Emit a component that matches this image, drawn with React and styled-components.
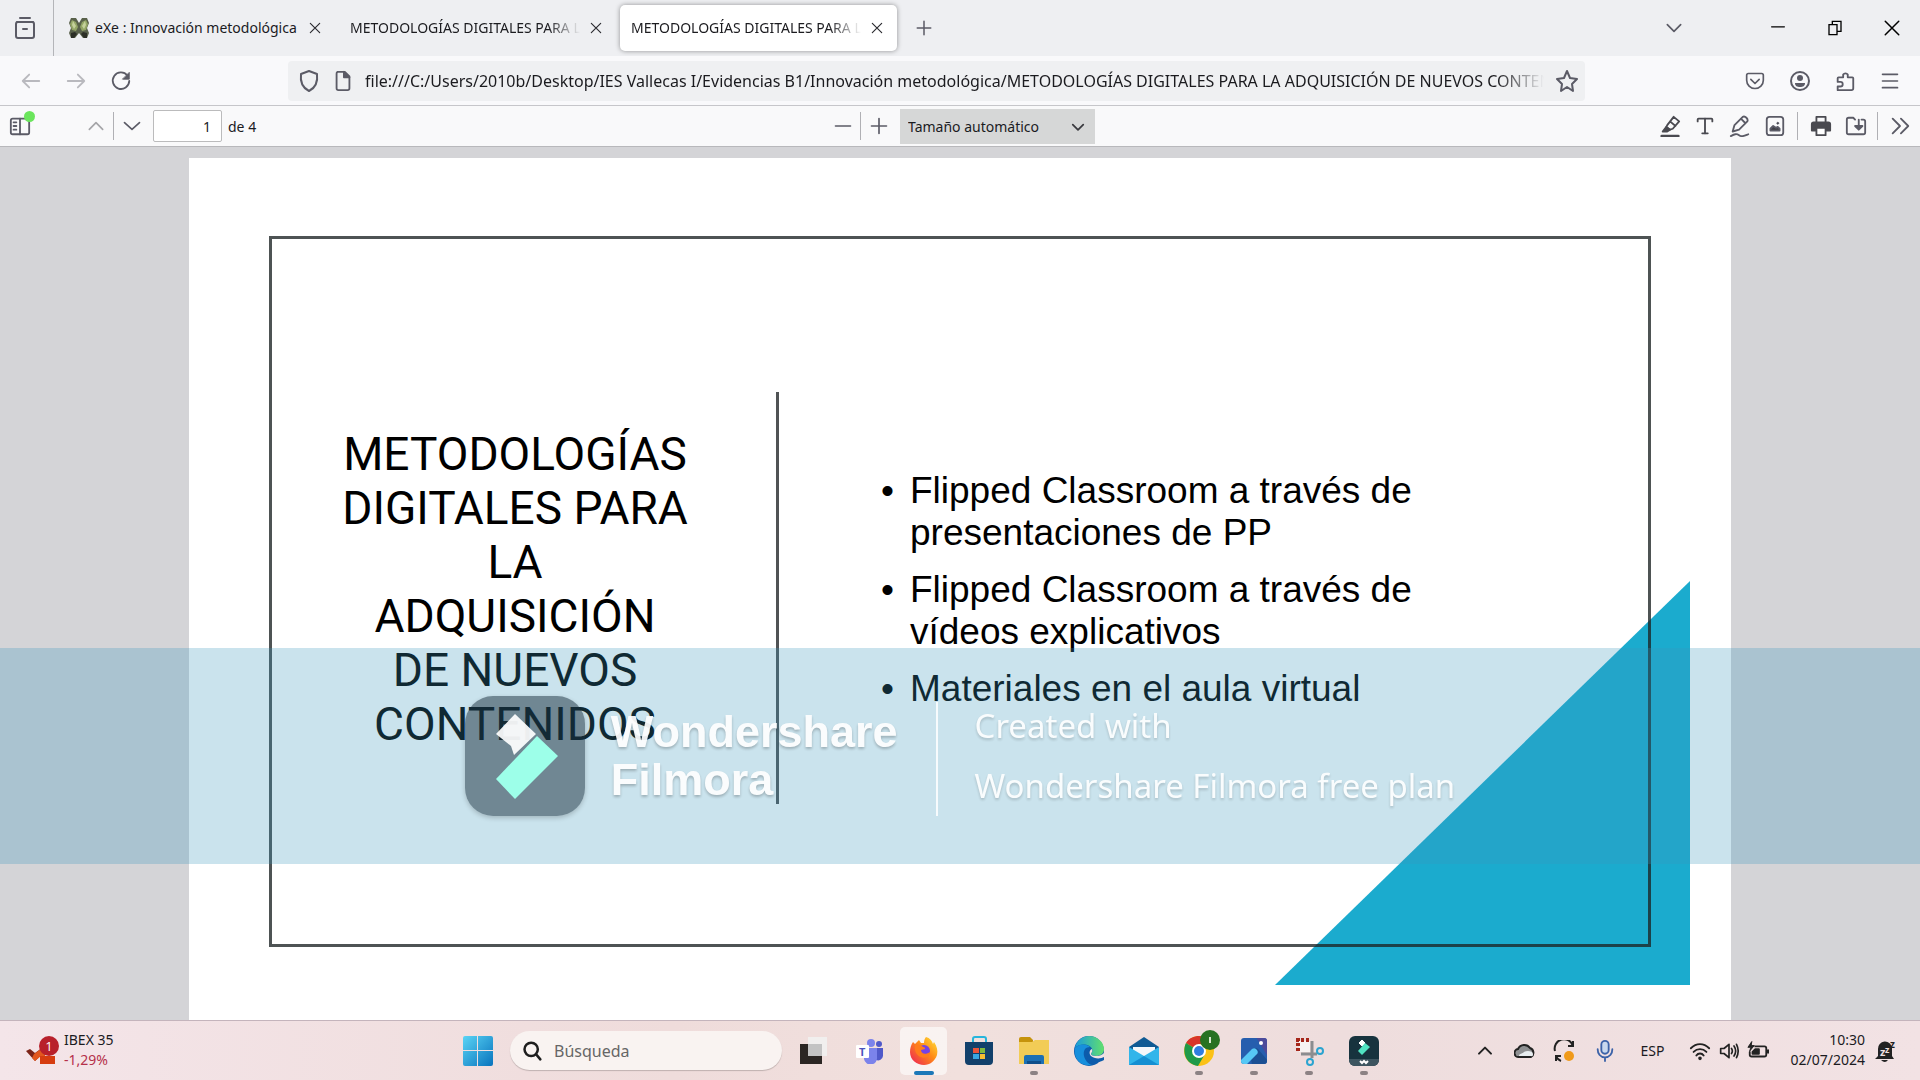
import React, { useState } from "react";
import styled, { createGlobalStyle } from "styled-components";
import { Type } from "lucide-react";

const GlobalStyle = createGlobalStyle`
  * {
    box-sizing: border-box;
  }
  body {
    margin: 0;
    overflow: hidden;
    font-family: "Noto Sans", "Open Sans", sans-serif;
    color: #1b1b1f;
  }
  button, input, select {
    font-family: inherit;
    color: inherit;
  }
  button {
    border: 0;
    padding: 0;
    background: none;
  }
  svg {
    display: block;
    flex: none;
  }
`;

// line icons of the browser chrome, all on a 24 grid
const Icon = ({ size = 24, width = 2, color = "#5b5b66", children }) => (
  <svg
    width={size}
    height={size}
    viewBox="0 0 24 24"
    fill="none"
    stroke={color}
    strokeWidth={width}
    strokeLinecap="round"
    strokeLinejoin="round"
    aria-hidden="true"
  >
    {children}
  </svg>
);

const CloseIcon = () => (
  <Icon size={14} width={2} color="#2b2b30">
    <path d="M4 4l16 16M20 4L4 20" />
  </Icon>
);

const Favicon = () => (
  <svg width="20" height="22" viewBox="0 0 20 22" aria-hidden="true">
    <path d="M2 1h5l3 5 3-5h5l2 5-2 5 2 5-2 5h-4l-4-5-4 5H2l-2-5 2-5-2-5z" fill="#59614b" />
    <path d="M3 3l4 2 2 5-2 4-4-1-2-6zM17 3l-4 2-2 5 2 4 4-1 2-6z" fill="#93a566" />
    <path d="M4 4l3 5-2 3-2-4zM16 4l-3 5 2 3 2-4z" fill="#c5d19c" />
    <path d="M2 16l4-1 2 2-3 4H2zM18 16l-4-1-2 2 3 4h3z" fill="#2c2f27" />
  </svg>
);

const tabs = [
  { id: 1, title: "eXe : Innovación metodológica", favicon: true },
  { id: 2, title: "METODOLOGÍAS DIGITALES PARA LA ADQUISICIÓN" },
  { id: 3, title: "METODOLOGÍAS DIGITALES PARA LA ADQUISICIÓN" },
];

const titleLines = [
  "METODOLOGÍAS",
  "DIGITALES PARA",
  "LA",
  "ADQUISICIÓN",
  "DE NUEVOS",
  "CONTENIDOS",
];

const points = [
  "Flipped Classroom a través de presentaciones de PP",
  "Flipped Classroom a través de vídeos explicativos",
  "Materiales en el aula virtual",
];

const TabStrip = () => {
  const [active, setActive] = useState(3);

  return (
    <TabBar>
      <FirefoxView>
        <IconButton $w={50} aria-label="Firefox View">
          <Icon size={24} width={2}>
            <path d="M7 2h10M4 6h16" />
            <rect x="3" y="6" width="18" height="16" rx="2" />
            <path d="M10 13h4" />
          </Icon>
        </IconButton>
      </FirefoxView>
      {tabs.map(({ id, title, favicon }) => (
        <Tab key={id} $active={active === id}>
          {favicon && <Favicon />}
          <TabTitle onClick={() => setActive(id)} $fade={!favicon}>
            {title}
          </TabTitle>
          <TabClose aria-label="Cerrar pestaña">
            <CloseIcon />
          </TabClose>
        </Tab>
      ))}
      <IconButton $w={50} aria-label="Nueva pestaña">
        <Icon size={18} width={2}>
          <path d="M12 3v18M3 12h18" />
        </Icon>
      </IconButton>
      <WindowControls>
        <IconButton $w={151} aria-label="Listar pestañas">
          <Icon size={20} width={2}>
            <path d="M4 8l8 8 8-8" />
          </Icon>
        </IconButton>
        <IconButton $w={57} aria-label="Minimizar">
          <Icon size={14} width={2} color="#000">
            <path d="M1 10h22" />
          </Icon>
        </IconButton>
        <IconButton $w={57} aria-label="Restaurar">
          <Icon size={16} width={2} color="#000">
            <path d="M3 7h12v15H3zM8 7V2h13v15h-6" strokeLinejoin="miter" />
          </Icon>
        </IconButton>
        <IconButton $w={57} aria-label="Cerrar">
          <Icon size={18} width={2} color="#000">
            <path d="M3 3l18 18M21 3L3 21" />
          </Icon>
        </IconButton>
      </WindowControls>
    </TabBar>
  );
};

const NavBar = () => (
  <Nav>
    <IconButton aria-label="Atrás" disabled>
      <Icon size={22} color="#b9b9be">
        <path d="M21 12H3M10 5l-7 7 7 7" />
      </Icon>
    </IconButton>
    <IconButton aria-label="Adelante" disabled>
      <Icon size={22} color="#b9b9be">
        <path d="M3 12h18M14 5l7 7-7 7" />
      </Icon>
    </IconButton>
    <IconButton aria-label="Recargar">
      <Icon size={22}>
        <path d="M19 6a9 9 0 1 0 2 6" />
        <path d="M21 3v7h-7z" fill="#5b5b66" strokeWidth="1" />
      </Icon>
    </IconButton>
    <UrlBar>
      <Icon size={24}>
        <path d="M12 2l8 3c1 8-2 14-8 17C6 19 3 13 4 5z" />
      </Icon>
      <Icon size={22}>
        <path d="M6 2h8l5 5v13a2 2 0 0 1-2 2H7a2 2 0 0 1-2-2V4a2 2 0 0 1 1-2z" />
        <path d="M13 2v6h6z" fill="#5b5b66" />
      </Icon>
      <UrlInput
        type="text"
        aria-label="Dirección"
        defaultValue="file:///C:/Users/2010b/Desktop/IES Vallecas I/Evidencias B1/Innovación metodológica/METODOLOGÍAS DIGITALES PARA LA ADQUISICIÓN DE NUEVOS CONTENIDOS.pdf"
      />
      <StarButton aria-label="Añadir a marcadores">
        <Icon size={24}>
          <path d="M12 2l3 7 7 1-5 5 1 7-6-4-6 4 1-7-5-5 7-1z" />
        </Icon>
      </StarButton>
    </UrlBar>
    <IconButton aria-label="Pocket">
      <Icon size={20}>
        <path d="M4 3h16a2 2 0 0 1 2 2v6a10 10 0 0 1-20 0V5a2 2 0 0 1 2-2z" />
        <path d="M7 10l5 5 5-5" />
      </Icon>
    </IconButton>
    <IconButton aria-label="Cuenta">
      <Icon size={24}>
        <circle cx="12" cy="12" r="9" />
        <circle cx="12" cy="9" r="3" fill="#5b5b66" stroke="none" />
        <path d="M7 14h10c0 3-2 4-5 4s-5-1-5-4z" fill="#5b5b66" stroke="none" />
      </Icon>
    </IconButton>
    <IconButton aria-label="Extensiones">
      <Icon size={22}>
        <path d="M4 22h15a2 2 0 0 0 2-2V9a1 1 0 0 0-1-1h-5V5a3 3 0 0 0-5 0v3H5a1 1 0 0 0-1 1v4h3a2 2 0 0 1 0 5H4z" />
      </Icon>
    </IconButton>
    <IconButton aria-label="Menú">
      <Icon size={20}>
        <path d="M3 4h18M3 12h18M3 20h18" />
      </Icon>
    </IconButton>
  </Nav>
);

const PdfToolbar = () => (
  <PdfBar>
    <PdfGroup>
      <SidebarButton aria-label="Mostrar barra lateral">
        <Icon size={22}>
          <rect x="2" y="4" width="20" height="17" rx="2" />
          <path d="M12 4v17M5 8h3M5 12h3M5 16h3" />
        </Icon>
        <GreenDot />
      </SidebarButton>
      <PdfButton aria-label="Página anterior">
        <Icon size={20} color="#a5a5a8">
          <path d="M4 16l8-8 8 8" />
        </Icon>
      </PdfButton>
      <Separator />
      <PdfButton aria-label="Página siguiente">
        <Icon size={20}>
          <path d="M3 8l9 8 9-8" />
        </Icon>
      </PdfButton>
      <PageInput id="page-number" type="text" defaultValue="1" />
      <PageLabel htmlFor="page-number">de 4</PageLabel>
    </PdfGroup>
    <PdfGroup>
      <PdfButton aria-label="Reducir">
        <Icon size={20}>
          <path d="M3 12h18" />
        </Icon>
      </PdfButton>
      <Separator />
      <PdfButton aria-label="Aumentar">
        <Icon size={20}>
          <path d="M12 3v18M3 12h18" />
        </Icon>
      </PdfButton>
      <ZoomBox>
        <ZoomSelect aria-label="Zoom" defaultValue="auto">
          <option value="auto">Tamaño automático</option>
          <option value="100">100 %</option>
        </ZoomSelect>
        <ZoomArrow>
          <Icon size={14} width={3} color="#3a3a3f">
            <path d="M3 8l9 9 9-9" />
          </Icon>
        </ZoomArrow>
      </ZoomBox>
    </PdfGroup>
    <PdfGroup $end>
      <PdfButton aria-label="Resaltar">
        <Icon size={22} color="#4a4a50">
          <path d="M3 23h18" strokeWidth="3" />
          <path d="M9 11l7-9 6 5-7 8-3 1-4-3zM12 7l6 5" />
          <path d="M8 13l4 3-3 2H4z" fill="#4a4a50" />
        </Icon>
      </PdfButton>
      <PdfButton aria-label="Texto">
        <Type size={22} color="#4a4a50" strokeWidth={2} />
      </PdfButton>
      <PdfButton aria-label="Dibujar">
        <Icon size={22}>
          <path d="M4 18l2-7 9-9q2-1 4 1t1 4l-9 9zM13 4l5 5" />
          <path d="M2 23c4-2 6-3 9-1s5 1 10-1" />
        </Icon>
      </PdfButton>
      <PdfButton aria-label="Añadir imagen">
        <Icon size={22}>
          <rect x="3" y="2" width="18" height="20" rx="3" />
          <path d="M7 17v-2l3-3 3 2 2-1 2 2v2z" fill="#3f3f45" />
          <circle cx="15" cy="9" r="1" fill="#3f3f45" strokeWidth="1" />
        </Icon>
      </PdfButton>
      <Separator $gap={5} />
      <PdfButton aria-label="Imprimir">
        <Icon size={22} color="#4a4a50">
          <path d="M7 8V2h10v6" />
          <path d="M4 8h16a2 2 0 0 1 2 2v7h-4v-3H6v3H2v-7a2 2 0 0 1 2-2z" fill="#4a4a50" />
          <path d="M7 14h10v8H7z" fill="#fff" />
        </Icon>
      </PdfButton>
      <PdfButton aria-label="Guardar">
        <Icon size={22}>
          <path d="M9 3H4a2 2 0 0 0-2 2v14a2 2 0 0 0 2 2h16a2 2 0 0 0 2-2V7a2 2 0 0 0-2-2h-2M9 3l2 2" />
          <path d="M15 5v10M11 12l4 4 4-4z" fill="#5b5b66" />
        </Icon>
      </PdfButton>
      <Separator $gap={4} />
      <PdfButton aria-label="Herramientas">
        <Icon size={22}>
          <path d="M4 4l8 8-8 8M13 4l8 8-8 8" />
        </Icon>
      </PdfButton>
    </PdfGroup>
  </PdfBar>
);

const Slide = () => (
  <Page>
    <Corner viewBox="0 0 415 404" preserveAspectRatio="none" aria-hidden="true">
      <path d="M415 0v404H0z" fill="#1babce" />
    </Corner>
    <Frame>
      <SlideTitle>
        {titleLines.map((line) => (
          <span key={line}>{line}</span>
        ))}
      </SlideTitle>
      <Divider />
      <Points>
        {points.map((point) => (
          <li key={point}>{point}</li>
        ))}
      </Points>
    </Frame>
  </Page>
);

const Watermark = () => (
  <Band>
    <FilmoraBadge>
      <svg width="120" height="120" viewBox="0 0 120 120" aria-hidden="true">
        <path d="M50 18l21 20-22 21-3-9-15-12z" fill="#fff" fillOpacity=".92" />
        <path d="M72 40l21 20-43 43-19-20z" fill="#9dffe9" />
      </svg>
    </FilmoraBadge>
    <Brand>
      Wondershare
      <br />
      Filmora
    </Brand>
    <BandLine />
    <Credit>
      Created with
      <br />
      Wondershare Filmora free plan
    </Credit>
  </Band>
);

/* Taskbar icons */
const StartIcon = () => (
  <svg width="30" height="30" viewBox="0 0 30 30">
    <defs>
      <linearGradient id="win" x1="0" y1="0" x2="1" y2="1">
        <stop offset="0" stopColor="#5ad4f5" />
        <stop offset="1" stopColor="#0873bd" />
      </linearGradient>
    </defs>
    <path d="M2 0h12v14H0V2a2 2 0 0 1 2-2zM15 0h13a2 2 0 0 1 2 2v12H15zM0 15h14v15H2a2 2 0 0 1-2-2zM15 15h15v13a2 2 0 0 1-2 2H15z" fill="url(#win)" />
  </svg>
);

const TaskViewIcon = () => (
  <svg width="30" height="28" viewBox="0 0 30 28">
    <path d="M1 7h22v20H1z" fill="#2b2623" />
    <path d="M9 0h19v19H9z" fill="#f1efee" />
    <path d="M9 7h14v12H9z" fill="#c3c3c3" />
  </svg>
);

const TeamsIcon = () => (
  <svg width="28" height="26" viewBox="0 0 28 26">
    <circle cx="16" cy="5" r="4" fill="#7b83eb" />
    <circle cx="24" cy="6" r="3" fill="#5059c9" />
    <path d="M19 10h9v8a5 5 0 0 1-7 4z" fill="#5059c9" />
    <path d="M9 10h13v9a6 6 0 0 1-13 2z" fill="#7b83eb" />
    <rect x="1" y="7" width="13" height="13" rx="1" fill="#fff" />
    <text x="4" y="18" fontSize="11" fontWeight="700" fontFamily="Open Sans" fill="#4b53bc">T</text>
  </svg>
);

const FirefoxIcon = () => (
  <svg width="30" height="30" viewBox="0 0 30 30">
    <defs>
      <linearGradient id="fox" x1="1" y1="0" x2="0" y2="1">
        <stop offset="0" stopColor="#ffe83b" />
        <stop offset=".45" stopColor="#ff8a16" />
        <stop offset="1" stopColor="#ec1a5c" />
      </linearGradient>
    </defs>
    <path d="M17 1c4 1 6 4 7 7l1-2c3 4 4 9 3 13-2 6-7 10-13 10C8 29 1 24 1 16c0-4 1-7 3-10l2 2 4-4 2 3 3 0c0-3 1-5 2-6z" fill="url(#fox)" />
    <circle cx="15" cy="15" r="6" fill="#7542e5" />
    <path d="M6 9c3-1 6 0 8 2 2 0 2 1 2 2l-4 1c0 4 5 5 9 2 0 4-5 7-9 5-4-1-7-6-6-12z" fill="#ff7c1c" />
  </svg>
);

const StoreIcon = () => (
  <svg width="30" height="30" viewBox="0 0 30 30">
    <path d="M9 8V3a2 2 0 0 1 2-2h9a2 2 0 0 1 2 2v5" fill="none" stroke="#27b5dc" strokeWidth="2" />
    <path d="M1 6h28v19a4 4 0 0 1-4 4H5a4 4 0 0 1-4-4z" fill="#12406b" />
    <path d="M9 12h6v5H9z" fill="#e9553a" />
    <path d="M16 12h5v5h-5z" fill="#80b93d" />
    <path d="M9 18h6v5H9z" fill="#37a8e3" />
    <path d="M16 18h5v5h-5z" fill="#f5bd32" />
  </svg>
);

const ExplorerIcon = () => (
  <svg width="32" height="28" viewBox="0 0 32 28">
    <path d="M1 2a2 2 0 0 1 2-2h9l3 3v4H1z" fill="#c6930c" />
    <path d="M1 5h13l3-2h14v24H1z" fill="#f2cc56" />
    <path d="M6 20a2 2 0 0 1 2-2h16a2 2 0 0 1 2 2v7H6z" fill="#1c70b5" />
    <path d="M9 24h14v3H9z" fill="#0f4f8b" />
  </svg>
);

const EdgeIcon = () => (
  <svg width="30" height="30" viewBox="0 0 30 30">
    <defs>
      <linearGradient id="edge" x1="0" y1="0" x2="1" y2="0">
        <stop offset="0" stopColor="#1a9bdc" />
        <stop offset="1" stopColor="#62e06c" />
      </linearGradient>
    </defs>
    <circle cx="15" cy="15" r="15" fill="#0d5cab" />
    <path d="M1 12C2 5 8 0 15 0c8 0 15 6 15 13 0 5-4 7-8 7-3 0-5-1-5-2s2-2 1-5c-1-4-11-7-17-1z" fill="url(#edge)" />
    <path d="M1 12c5-5 12-4 15-1-5 0-7 4-6 9 1 4 4 8 8 9C8 31-1 24 1 12z" fill="#178fdc" />
    <path d="M18 13c1 3-1 4-1 5s2 2 5 2c4 0 6-1 8-3v7l-2 1c-1 0-2 1-3 1-7 2-13-3-12-8 0-3 3-6 5-5z" fill="#0d5cab" />
    <path d="M18 13c1 3-1 4-1 5s2 2 5 2c4 0 6-1 8-3v4c-3 2-10 2-13-1-2-2-2-6 1-7z" fill="#efe2e2" />
  </svg>
);

const MailIcon = () => (
  <svg width="30" height="28" viewBox="0 0 30 28">
    <path d="M0 10L15 0l15 10v4H0z" fill="#0f5a94" />
    <path d="M4 10h22v8L15 22 4 18z" fill="#f4f7fa" />
    <path d="M0 10l15 9 15-9v18H0z" fill="#31b5ea" />
    <path d="M0 28l15-9 15 9z" fill="#158fd2" />
  </svg>
);

const ChromeIcon = () => (
  <svg width="42" height="44" viewBox="-4 0 42 44">
    <circle cx="17" cy="22" r="15" fill="#fbc116" />
    <path d="M17 22L4 14C7 9 12 7 17 7c6 0 11 3 14 8H17z" fill="#d8352a" />
    <path d="M17 22L4 14c-4 8-1 21 12 23l7-12z" fill="#1f9a49" />
    <circle cx="17" cy="22" r="7" fill="#fff" />
    <circle cx="17" cy="22" r="5" fill="#2f7de1" />
    <circle cx="28" cy="11" r="10" fill="#267222" />
    <path d="M28 8v6" stroke="#d7e8d0" strokeWidth="2" />
  </svg>
);

const PhotosIcon = () => (
  <svg width="28" height="28" viewBox="0 0 28 28">
    <defs>
      <clipPath id="photo">
        <rect x="1" y="1" width="26" height="26" rx="3" />
      </clipPath>
    </defs>
    <g clipPath="url(#photo)">
      <path d="M0 0h28v28H0z" fill="#265eae" />
      <path d="M16 0h12v20z" fill="#4c4b9b" />
      <path d="M10 16l3-4q2-2 5 0l10 12v4H12z" fill="#1b4f93" />
      <path d="M0 24l12-12q3-2 5 1t-1 5L6 28H0z" fill="#56c8f5" />
    </g>
    <circle cx="21" cy="6" r="2" fill="#fff" />
  </svg>
);

const SnipIcon = () => (
  <svg width="30" height="30" viewBox="0 0 30 30">
    <path d="M5 5h11v11H5z" fill="#f7f3f2" />
    <path d="M2 4h14M4 2v14" stroke="#a5261a" strokeWidth="4" strokeDasharray="3 2" fill="none" />
    <path d="M18 5v17M7 18h16" stroke="#8b8d90" strokeWidth="3" />
    <circle cx="26" cy="15" r="3" fill="none" stroke="#2ba4d0" strokeWidth="2" />
    <circle cx="16" cy="26" r="3" fill="none" stroke="#2ba4d0" strokeWidth="2" />
  </svg>
);

const FilmoraIcon = () => (
  <svg width="30" height="30" viewBox="0 0 30 30">
    <rect width="30" height="30" rx="6" fill="#17333e" />
    <path d="M0 23h30v1a6 6 0 0 1-6 6H6a6 6 0 0 1-6-6z" fill="#3d5560" />
    <path d="M13 4l3 3-3 3-3-3z" fill="#fff" stroke="#fff" />
    <path d="M16 7l5 4-8 8-4-4z" fill="#50e3c2" />
    <path d="M11 25l2 2 2-2 2 2 2-2" stroke="#fff" strokeWidth="2" fill="none" />
  </svg>
);

const MarketIcon = () => (
  <svg width="34" height="30" viewBox="0 0 34 30">
    <path d="M1 15l4-2 5 4 11-8 2 4-13 12z" fill="#7c2418" />
    <path d="M9 18l11-8v10h-4l-6 5-3-3z" fill="#e2571e" />
    <path d="M15 20h15v8H15z" fill="#d63d10" />
    <circle cx="24" cy="10" r="10" fill="#b8202b" />
    <text x="24" y="15" fontSize="13" textAnchor="middle" fontFamily="Open Sans" fill="#fff">1</text>
  </svg>
);

const apps = [
  { name: "Vista de tareas", icon: <TaskViewIcon /> },
  { name: "Teams", icon: <TeamsIcon /> },
  { name: "Firefox", icon: <FirefoxIcon />, active: true },
  { name: "Microsoft Store", icon: <StoreIcon /> },
  { name: "Explorador", icon: <ExplorerIcon />, running: true },
  { name: "Edge", icon: <EdgeIcon /> },
  { name: "Correo", icon: <MailIcon /> },
  { name: "Chrome", icon: <ChromeIcon />, running: true },
  { name: "Fotos", icon: <PhotosIcon />, running: true },
  { name: "Recortes", icon: <SnipIcon />, running: true },
  { name: "Filmora", icon: <FilmoraIcon />, running: true },
];

const TaskBar = () => (
  <Taskbar>
    <Widget>
      <MarketIcon />
      <Lines>
        <span>IBEX 35</span>
        <Loss>-1,29%</Loss>
      </Lines>
    </Widget>
    <AppButton aria-label="Inicio">
      <StartIcon />
    </AppButton>
    <SearchBox>
      <Icon size={20} width={3} color="#1e1e1e">
        <circle cx="11" cy="10" r="8" />
        <path d="M17 16l5 6" />
      </Icon>
      <input type="text" placeholder="Búsqueda" aria-label="Búsqueda" />
    </SearchBox>
    {apps.map(({ name, icon, active, running }) => (
      <AppButton key={name} aria-label={name} $active={active}>
        {icon}
        {(active || running) && <Indicator $active={active} />}
      </AppButton>
    ))}
    <Tray>
      <TrayButton aria-label="Iconos ocultos">
        <Icon size={16} width={3} color="#222">
          <path d="M3 16l9-9 9 9" />
        </Icon>
      </TrayButton>
      <TrayButton aria-label="OneDrive">
        <svg width="22" height="18" viewBox="0 0 22 18">
          <path d="M5 15a4 4 0 0 1-1-8 7 7 0 0 1 12-1 5 5 0 0 1 1 9z" fill="#8e9092" stroke="#222" strokeWidth="2" />
          <path d="M5 14c0-3 4-2 5-4 3-2 9-1 9 2s-1 2-3 2z" fill="#e8edf0" />
        </svg>
      </TrayButton>
      <TrayButton aria-label="Actualizaciones">
        <svg width="24" height="22" viewBox="0 0 24 22" fill="none" stroke="#222" strokeWidth="2">
          <path d="M2 11a9 9 0 0 1 18-5M20 1v5h-5M8 21a9 9 0 0 1-5-5M3 21v-5h5" />
          <circle cx="16" cy="16" r="5" fill="#f09a1a" stroke="none" />
        </svg>
      </TrayButton>
      <TrayButton aria-label="Micrófono">
        <Icon size={22} color="#3b62a8">
          <rect x="8" y="1" width="8" height="14" rx="4" fill="#c8d8ee" />
          <path d="M4 10c0 5 3 9 8 9s8-4 8-9M12 19v4" />
        </Icon>
      </TrayButton>
      <TrayButton $w={56}>ESP</TrayButton>
      <TrayStatus aria-label="Red, volumen y batería">
        <Icon size={22} color="#222">
          <path d="M2 9c6-6 14-6 20 0M5 13c4-4 10-4 14 0M8 17c2-3 6-3 8 0" />
          <circle cx="12" cy="20" r="1" fill="#222" />
        </Icon>
        <Icon size={20} color="#222">
          <path d="M2 9h4l6-5v16l-6-5H2zM15 9q2 3 0 6M18 6q4 6 0 12M21 4q4 8 0 16" />
        </Icon>
        <Icon size={22} color="#222">
          <path d="M9 7h10a2 2 0 0 1 2 2v7a2 2 0 0 1-2 2H5a2 2 0 0 1-2-2v-3M23 11v3" />
          <path d="M9 10h4v5H6v-2z" fill="#222" />
          <path d="M5 2L1 8h3l-1 4 5-6H5z" fill="#222" strokeWidth="1" />
        </Icon>
      </TrayStatus>
      <Clock>
        <span>10:30</span>
        <span>02/07/2024</span>
      </Clock>
      <svg width="22" height="24" viewBox="0 0 22 24">
        <path d="M4 17V10a6 6 0 0 1 14-1v8l2 3H1z" fill="#222" />
        <path d="M7 21h7q-3 4-7 0z" fill="#222" />
        <text x="6" y="17" fontSize="11" fontWeight="700" fontFamily="Open Sans" fill="#f1e1e1">z</text>
        <text x="11" y="14" fontSize="9" fontWeight="700" fontFamily="Open Sans" fill="#f1e1e1">z</text>
        <text x="16" y="9" fontSize="10" fontWeight="700" fontFamily="Open Sans" fill="#222">z</text>
      </svg>
    </Tray>
  </Taskbar>
);

const App = () => {
  return (
    <Screen>
      <GlobalStyle />
      <TabStrip />
      <NavBar />
      <PdfToolbar />
      <Viewer>
        <Slide />
      </Viewer>
      <Watermark />
      <TaskBar />
    </Screen>
  );
};

export default App;

const Screen = styled.div`
  position: relative;
  display: flex;
  flex-direction: column;
  height: 100vh;
  overflow: hidden;
`;

const IconButton = styled.button`
  display: flex;
  align-items: center;
  justify-content: center;
  flex: none;
  width: ${({ $w }) => $w || 45}px;
  height: 40px;
`;

/* tabs */
const TabBar = styled.div`
  display: flex;
  align-items: center;
  flex: none;
  height: 56px;
  background: #eeeff2;
`;

const FirefoxView = styled.div`
  display: flex;
  align-items: center;
  align-self: stretch;
  width: 54px;
  margin-right: 2px;
  border-right: 1px solid #b4b5b9;
`;

const Tab = styled.div`
  display: flex;
  align-items: center;
  gap: 6px;
  width: 277px;
  height: 46px;
  margin: 0 2px;
  padding: 0 10px 0 11px;
  border-radius: 5px;
  background: ${({ $active }) => ($active ? "#fff" : "transparent")};
  box-shadow: ${({ $active }) => ($active ? "0 0 5px rgba(0, 0, 0, 0.4)" : "none")};
`;

const TabTitle = styled.button`
  flex: 1;
  min-width: 0;
  overflow: hidden;
  font-size: 14px;
  line-height: 24px;
  text-align: left;
  white-space: nowrap;
  mask-image: ${({ $fade }) =>
    $fade ? "linear-gradient(to right, #000 86%, transparent)" : "none"};
`;

const TabClose = styled.button`
  display: flex;
  align-items: center;
  justify-content: center;
  width: 20px;
  height: 24px;
`;

const WindowControls = styled.div`
  display: flex;
  margin-left: auto;
`;

/* navigation */
const Nav = styled.div`
  display: flex;
  align-items: center;
  flex: none;
  height: 50px;
  padding: 0 8px;
  background: #f9f9fb;
  border-bottom: 1px solid #c6c6ca;
`;

const UrlBar = styled.div`
  display: flex;
  align-items: center;
  gap: 11px;
  flex: 1;
  min-width: 0;
  height: 40px;
  margin: 0 147px 0 145px;
  padding: 0 6px 0 9px;
  border-radius: 4px;
  background: #eff0f2;
`;

const UrlInput = styled.input`
  flex: 1;
  min-width: 0;
  padding: 0;
  border: 0;
  outline: 0;
  background: none;
  font-size: 16px;
  line-height: 24px;
  mask-image: linear-gradient(to right, #000 96%, transparent);
`;

const StarButton = styled.button`
  display: flex;
`;

/* pdf toolbar */
const PdfBar = styled.div`
  display: grid;
  grid-template-columns: 1fr auto 1fr;
  align-items: center;
  flex: none;
  height: 41px;
  background: #f9f9fa;
  border-bottom: 1px solid #b8b8bb;
`;

const PdfGroup = styled.div`
  display: flex;
  align-items: center;
  justify-content: ${({ $end }) => ($end ? "flex-end" : "flex-start")};
  padding: ${({ $end }) => ($end ? "0 3px 0 0" : "0")};
`;

const PdfButton = styled.button`
  display: flex;
  align-items: center;
  justify-content: center;
  width: 35px;
  height: 34px;
`;

const SidebarButton = styled(PdfButton)`
  position: relative;
  width: 40px;
  margin-right: 38px;
`;

const GreenDot = styled.span`
  position: absolute;
  top: 2px;
  right: 5px;
  width: 11px;
  height: 11px;
  border-radius: 50%;
  background: #6be55c;
`;

const Separator = styled.span`
  width: 1px;
  height: 28px;
  margin: 0 ${({ $gap }) => $gap || 0}px;
  background: #b0b0b4;
`;

const PageInput = styled.input`
  width: 69px;
  height: 32px;
  margin-left: 4px;
  padding: 0 10px;
  border: 1px solid #bbbbbc;
  border-radius: 2px;
  background: #fff;
  font-size: 14px;
  text-align: right;
`;

const PageLabel = styled.label`
  margin-left: 6px;
  font-size: 14px;
`;

const ZoomBox = styled.div`
  position: relative;
  margin-left: 4px;
`;

const ZoomSelect = styled.select`
  appearance: none;
  display: block;
  width: 195px;
  height: 35px;
  padding: 0 8px;
  border: 0;
  border-radius: 0;
  background: #d6d7d7;
  font-size: 14px;
`;

const ZoomArrow = styled.span`
  position: absolute;
  top: 11px;
  right: 10px;
  pointer-events: none;
`;

/* document */
const Viewer = styled.main`
  flex: 1;
  min-height: 0;
  overflow: hidden;
  padding: 11px 189px 0;
  background: #d4d4d7;
`;

const Page = styled.section`
  position: relative;
  display: flex;
  aspect-ratio: 16 / 9;
  padding: 78px 80px;
  background: #fff;
`;

const Corner = styled.svg`
  position: absolute;
  right: 41px;
  bottom: 40px;
  width: 415px;
  height: 404px;
`;

const Frame = styled.div`
  position: relative;
  display: flex;
  align-items: center;
  flex: 1;
  border: 3px solid rgba(28, 34, 36, 0.78);
`;

const SlideTitle = styled.h1`
  flex: 1;
  margin: 0;
  padding: 0 18px 6px 0;
  font-family: Roboto, sans-serif;
  font-size: 46px;
  font-weight: 400;
  line-height: 54px;
  text-align: center;
  color: #000;

  span {
    display: block;
  }
`;

const Divider = styled.span`
  width: 3px;
  height: 412px;
  margin-top: 12px;
  background: #505355;
`;

const Points = styled.ul`
  display: flex;
  flex-direction: column;
  gap: 15px;
  width: 640px;
  margin: 0 98px 0 131px;
  padding: 0 100px 4px 0;
  font-family: "Liberation Sans", sans-serif;
  font-size: 37px;
  line-height: 42px;
  color: #000;
  list-style: none;

  li {
    position: relative;
  }
  li::before {
    content: "•";
    position: absolute;
    left: -29px;
  }
`;

/* watermark */
const Band = styled.div`
  position: absolute;
  top: 60%;
  left: 0;
  right: 0;
  height: 20%;
  display: flex;
  align-items: center;
  justify-content: center;
  background: rgba(60, 150, 190, 0.27);
  color: #fff;
  pointer-events: none;
`;

const FilmoraBadge = styled.div`
  border-radius: 28px;
  background: rgba(21, 43, 57, 0.5);
  box-shadow: 0 2px 5px rgba(0, 0, 0, 0.2);
`;

const Brand = styled.div`
  margin-left: 26px;
  font-family: "Liberation Sans", sans-serif;
  font-size: 45px;
  font-weight: 700;
  line-height: 48px;
  opacity: 0.92;
  text-shadow: 0 2px 3px rgba(0, 0, 0, 0.25);
`;

const BandLine = styled.span`
  width: 2px;
  height: 114px;
  margin: 6px 37px 0 38px;
  background: rgba(255, 255, 255, 0.85);
`;

const Credit = styled.div`
  font-family: "Noto Sans", sans-serif;
  font-size: 33px;
  line-height: 60px;
  opacity: 0.9;
  text-shadow: 0 2px 3px rgba(0, 0, 0, 0.2);
`;

/* taskbar */
const Taskbar = styled.footer`
  display: flex;
  align-items: center;
  flex: none;
  height: 60px;
  border-top: 1px solid #c4b4bc;
  background: linear-gradient(to right, #f4e5e9, #efdcdb 35%, #f1e0dd 50%, #eedddd 70%, #f2e2e4);
`;

const Widget = styled.div`
  display: flex;
  align-items: center;
  gap: 5px;
  width: 450px;
  padding-left: 25px;
`;

const Lines = styled.div`
  display: flex;
  flex-direction: column;
  padding-bottom: 2px;
  font-size: 14px;
  line-height: 20px;
`;

const Loss = styled.span`
  color: #b5304a;
`;

const AppButton = styled.button`
  position: relative;
  display: flex;
  align-items: center;
  justify-content: center;
  flex: none;
  width: 47px;
  height: 48px;
  margin: 0 4px;
  border-radius: 5px;
  background: ${({ $active }) => ($active ? "rgba(255, 255, 255, 0.6)" : "none")};
`;

const Indicator = styled.span`
  position: absolute;
  bottom: 0;
  width: ${({ $active }) => ($active ? 20 : 8)}px;
  height: 4px;
  border-radius: 2px;
  background: ${({ $active }) => ($active ? "#1c78b8" : "#8c8284")};
`;

const SearchBox = styled.label`
  display: flex;
  align-items: center;
  gap: 12px;
  flex: none;
  width: 272px;
  height: 39px;
  margin: 0 4px 0 5px;
  padding: 0 12px;
  border-radius: 20px;
  background: #f9f3f1;
  box-shadow: 0 1px 1px rgba(0, 0, 0, 0.2);

  input {
    flex: 1;
    min-width: 0;
    padding: 0;
    border: 0;
    outline: 0;
    background: none;
    font-size: 16px;
  }
  input::placeholder {
    color: #666;
    opacity: 1;
  }
`;

const Tray = styled.div`
  display: flex;
  align-items: center;
  margin-left: auto;
  padding-right: 24px;
`;

const TrayButton = styled.button`
  display: flex;
  align-items: center;
  justify-content: center;
  width: ${({ $w }) => $w || 40}px;
  height: 48px;
  font-size: 14px;
`;

const TrayStatus = styled.button`
  display: flex;
  align-items: center;
  gap: 8px;
  margin-left: 8px;
`;

const Clock = styled(Lines)`
  margin: 0 9px 0 22px;
  text-align: right;
`;
